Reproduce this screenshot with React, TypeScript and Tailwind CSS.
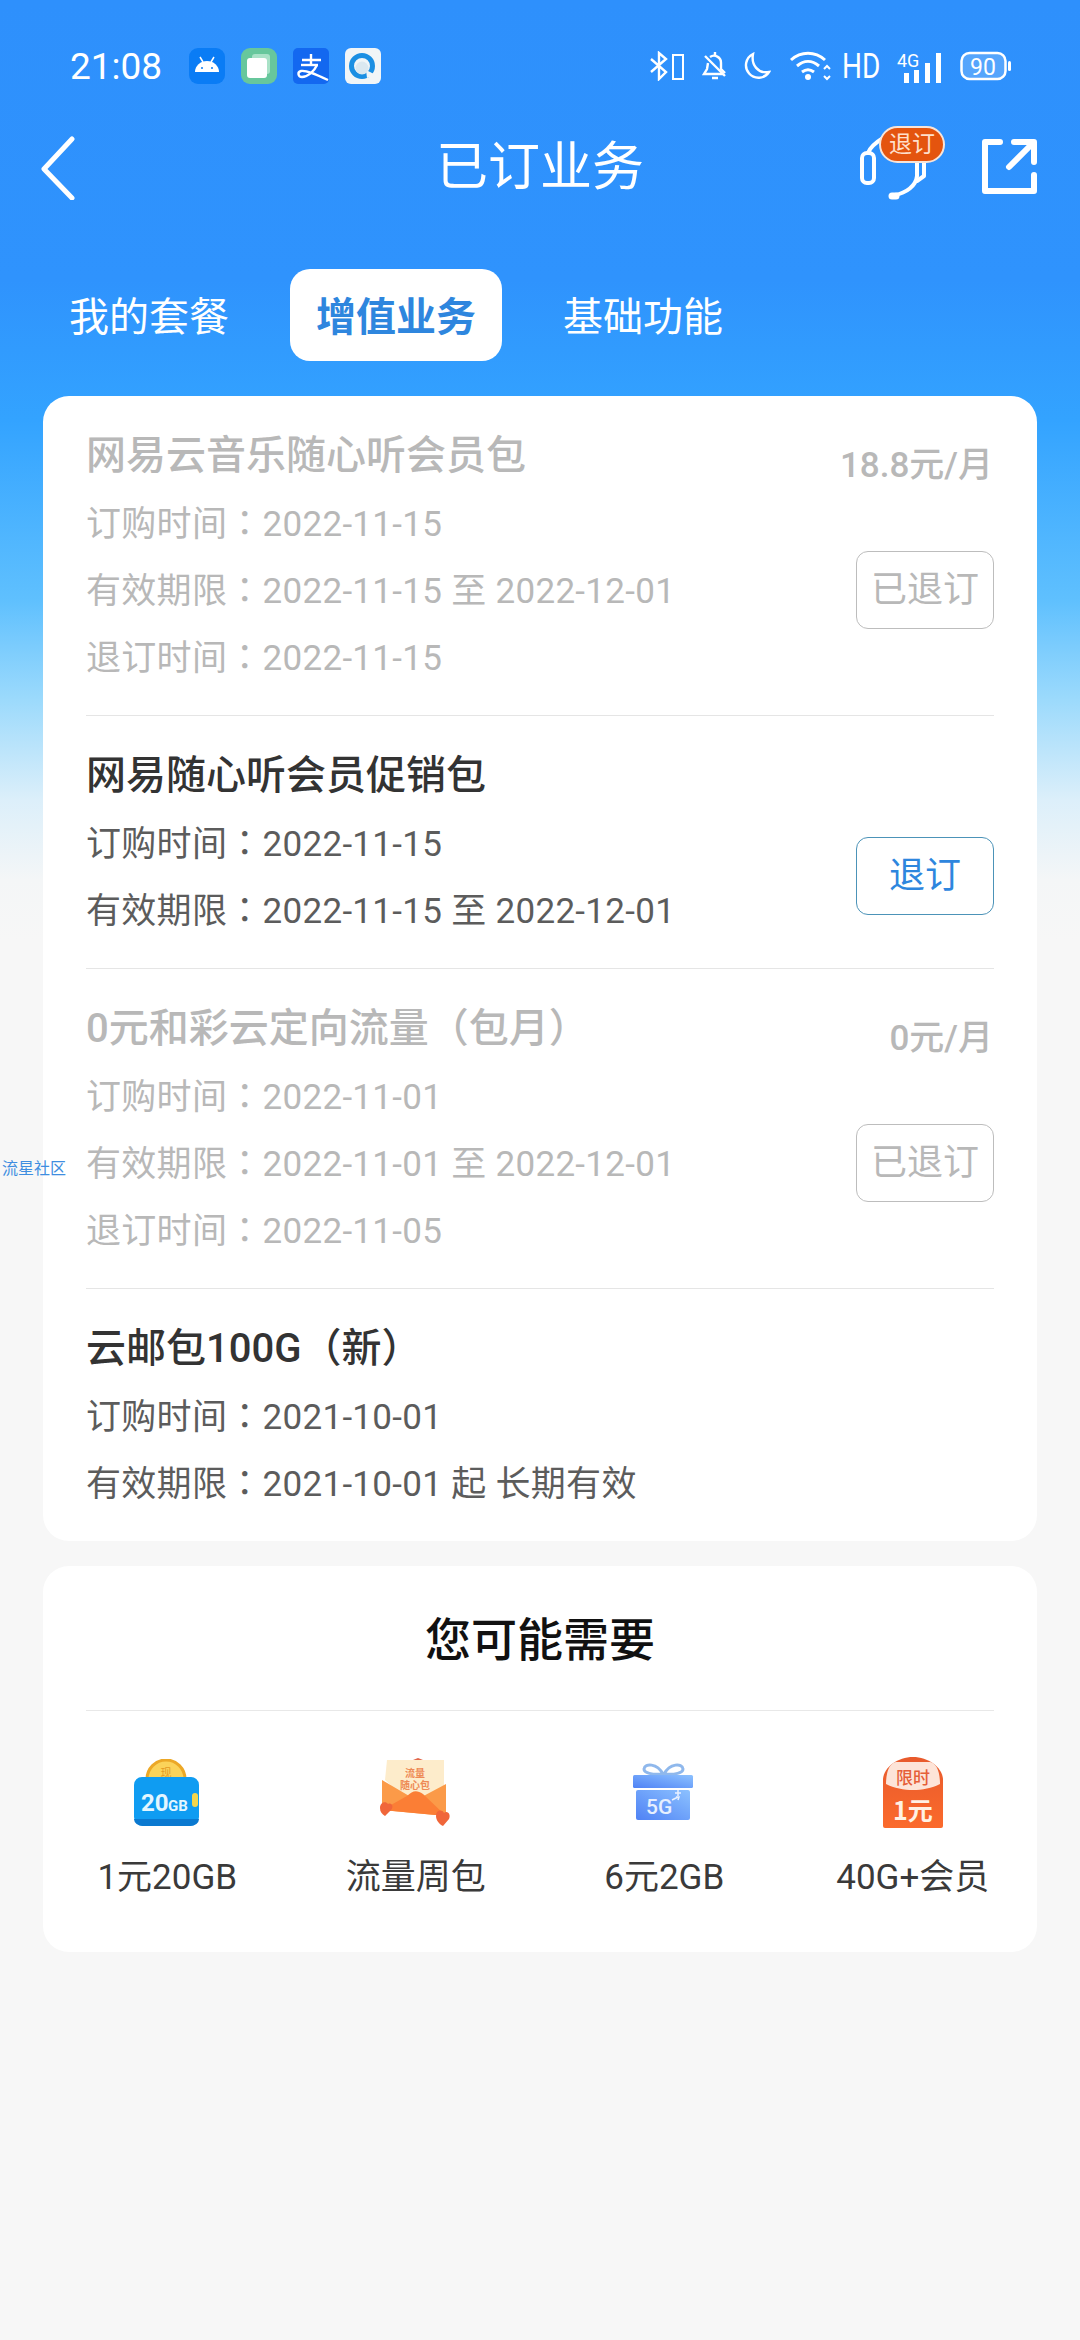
const packages = [
  {
    title: '网易云音乐随心听会员包',
    price: '18.8元/月',
    lines: [
      ['订购时间', '2022-11-15'],
      ['有效期限', '2022-11-15 至 2022-12-01'],
      ['退订时间', '2022-11-15'],
    ],
    action: '已退订',
    off: true,
  },
  {
    title: '网易随心听会员促销包',
    lines: [
      ['订购时间', '2022-11-15'],
      ['有效期限', '2022-11-15 至 2022-12-01'],
    ],
    action: '退订',
    off: false,
  },
  {
    title: '0元和彩云定向流量（包月）',
    price: '0元/月',
    lines: [
      ['订购时间', '2022-11-01'],
      ['有效期限', '2022-11-01 至 2022-12-01'],
      ['退订时间', '2022-11-05'],
    ],
    action: '已退订',
    off: true,
  },
  {
    title: '云邮包100G（新）',
    lines: [
      ['订购时间', '2021-10-01'],
      ['有效期限', '2021-10-01 起 长期有效'],
    ],
    off: false,
  },
];

function AndroidIcon() {
  return (
    <svg width="36" height="36" viewBox="0 0 36 36">
      <rect width="36" height="36" rx="9" fill="#0a7cf5" />
      <path d="M6 24a12 11 0 0 1 24 0z" fill="#fff" />
      <path d="M11 9l3 5M25 9l-3 5" stroke="#fff" strokeWidth="1.500" />
      <circle cx="13" cy="20" r="1" fill="#0a7cf5" />
      <circle cx="23" cy="20" r="1" fill="#0a7cf5" />
    </svg>
  );
}

function GreenIcon() {
  return (
    <svg width="36" height="36" viewBox="0 0 36 36">
      <rect width="36" height="36" rx="9" fill="#67c79c" />
      <rect x="11" y="6" width="18" height="20" rx="3" fill="#a9e2c7" />
      <rect x="6" y="10" width="20" height="20" rx="3" fill="#fff" />
    </svg>
  );
}

function AlipayIcon() {
  return (
    <svg width="36" height="36" viewBox="0 0 36 36" fill="none" stroke="#fff" strokeWidth="2.400">
      <rect width="36" height="36" rx="5" fill="#1368f0" stroke="none" />
      <path d="M9 12H28M18 6V17M24 17c-3 7-10 12-15 12-4 0-5-5-1-6 5-1 14 3 27 9" />
      <path d="M8 17H25" />
    </svg>
  );
}

function BrowserIcon() {
  return (
    <svg width="36" height="36" viewBox="0 0 36 36">
      <rect width="36" height="36" rx="6" fill="#f1f5f7" />
      <circle cx="17" cy="18" r="10.500" fill="none" stroke="#1b8fe3" strokeWidth="5" />
      <path d="M21 22l10 5-9 3z" fill="#f1f5f7" />
      <circle cx="17" cy="20" r="6.500" fill="#dbe8f0" />
    </svg>
  );
}

function StatusRight() {
  return (
    <div className="flex items-center text-white">
      <svg width="35" height="30" viewBox="0 0 35 30" fill="none" stroke="#fff" strokeWidth="2.400">
        <path d="M1 8l15 13-7 7V2l7 6L1 21" />
        <rect x="23" y="4" width="10" height="24" strokeWidth="2" />
      </svg>
      <svg className="ml-[17px]" width="26" height="30" viewBox="0 0 26 30" fill="none" stroke="#fff" strokeWidth="2.400">
        <path d="M8 6a7 7 0 0 1 11 6v6l4 4M6 12l-1 6-3 5h19" />
        <path d="M3 5l20 20M10 27h6M13 1v3" />
      </svg>
      <svg className="ml-[16px]" width="27" height="28" viewBox="0 0 27 28" fill="none" stroke="#fff" strokeWidth="2.400">
        <path d="M9 2a12.500 12.500 0 1 0 16 18C14 22 7 13 9 2z" />
      </svg>
      <svg className="ml-[18px]" width="42" height="30" viewBox="0 0 42 30" fill="none" stroke="#fff" strokeWidth="3">
        <path d="M2 9c10-9 24-9 34 0M8 15c7-6 15-6 22 0M13 21c4-3 8-3 12 0" />
        <circle cx="19" cy="26" r="3" fill="#fff" stroke="none" />
        <path d="M35 18l3-3 3 3M35 25l3 3 3-3" strokeWidth="2" />
      </svg>
      <div className="ml-[11px] w-[38px] text-[35px] leading-none scale-x-[0.8] origin-left">HD</div>
      <svg className="ml-[17px]" width="45" height="36" viewBox="0 -4 45 36">
        <text x="0" y="15" fontSize="18" fill="#fff" fontFamily="Roboto">4G</text>
        <rect x="7" y="21" width="5" height="10" fill="#fff" />
        <rect x="17" y="18" width="5" height="13" fill="#fff" />
        <rect x="28" y="11" width="5" height="20" fill="#fff" />
        <rect x="39" y="1" width="5" height="30" fill="#fff" />
      </svg>
      <svg className="ml-[18px]" width="51" height="30" viewBox="0 0 51 30">
        <rect x="1.500" y="2" width="44" height="26" rx="8" fill="#ffffff30" stroke="#fff" strokeWidth="2.500" />
        <rect x="48" y="10" width="3" height="10" rx="1.500" fill="#fff" />
        <text x="23" y="23.500" textAnchor="middle" fontSize="23" fill="#fff" fontFamily="Roboto">90</text>
      </svg>
    </div>
  );
}

function Headset() {
  return (
    <div className="relative w-[86px] h-[74px]">
      <svg width="74" height="74" viewBox="0 0 74 74" fill="none" stroke="#fff" strokeWidth="4" strokeLinecap="round" strokeLinejoin="round">
        <path d="M9 27C11 21 16 17 24 12" />
        <rect x="3" y="27" width="12" height="30" rx="5" />
        <path d="M58 36v14C57 60 47 67 36 69" />
        <path d="M65 36v14L58 55" />
        <path d="M33 70h4" strokeWidth="7" />
      </svg>
      <div className="absolute left-[20px] top-0 w-[66px] h-[37px] rounded-full border-2 border-[#f7e4d8] bg-[#e4540e] text-[#ffe0cc] text-[23px] leading-[33px] text-center">
        退订
      </div>
    </div>
  );
}

function ShareIcon() {
  return (
    <svg width="56" height="57" viewBox="0 0 56 57" fill="none" stroke="#fff" strokeWidth="6" strokeLinejoin="round" strokeLinecap="round">
      <path d="M19 4H4v49h49V37" />
      <path d="M28 29L52 5M33 4h20v20" />
    </svg>
  );
}

function WalletPic() {
  return (
    <svg width="66" height="68" viewBox="0 0 66 68">
      <circle cx="32" cy="20" r="19" fill="#fbd35a" stroke="#eca827" strokeWidth="3" />
      <text x="32" y="18" textAnchor="middle" fontSize="11" fill="#e49a24" fontFamily="Noto Sans CJK SC">现</text>
      <path d="M8 18H56a8 8 0 0 1 9 8V58a9 9 0 0 1-9 9H9a9 9 0 0 1-9-9V26a8 8 0 0 1 8-8z" fill="#0f9cf2" />
      <path d="M0 60a9 7 0 0 0 9 7H56a9 7 0 0 0 9-7z" fill="#0b79d0" />
      <text x="7" y="52" fontSize="24" fontWeight="700" fill="#e3f6ff" fontFamily="Roboto">20</text>
      <text x="34" y="52" fontSize="15" fontWeight="700" fill="#e3f6ff" fontFamily="Roboto">GB</text>
      <rect x="58" y="34" width="6" height="14" rx="3" fill="#f4d64c" />
    </svg>
  );
}

function EnvelopePic() {
  return (
    <svg width="72" height="70" viewBox="0 0 72 70">
      <path d="M33 2l5-2 5 2z" fill="#e2674a" />
      <path d="M5 22L7 2H64V30L36 50z" fill="#fdeccb" />
      <text x="35" y="19" textAnchor="middle" fontSize="10" fontWeight="700" fill="#ee8a55" fontFamily="Noto Sans CJK SC">流量</text>
      <text x="35" y="31" textAnchor="middle" fontSize="10" fontWeight="700" fill="#ee8a55" fontFamily="Noto Sans CJK SC">随心包</text>
      <path d="M2 22L36 42 66 26V58L2 52z" fill="#fb9a48" />
      <path d="M2 52L27 38c6-6 10-6 16-2L66 58z" fill="#fb7e35" />
      <path d="M0 50c0-6 6-7 8-4 4-2 6 3 3 6l-6 6c-3-2-5-4-5-8z" fill="#f0663a" />
      <path d="M56 58c0-6 6-7 8-3 4-3 7 2 5 6l-6 7c-4-2-7-6-7-10z" fill="#f0663a" />
    </svg>
  );
}

function GiftPic() {
  return (
    <svg width="62" height="60" viewBox="0 0 62 60">
      <defs>
        <linearGradient id="giftFill" x1="0" y1="1" x2="1" y2="0">
          <stop offset="0" stopColor="#4f82f5" />
          <stop offset="1" stopColor="#8cc1ff" />
        </linearGradient>
      </defs>
      <path d="M30 11C24 0 12 0 11 6c0 4 8 6 19 5zM31 11C37 0 49 0 50 6c0 4-8 6-19 5z" fill="none" stroke="#8fb8ec" strokeWidth="3" />
      <rect x="0" y="12" width="60" height="13" rx="1.500" fill="url(#giftFill)" />
      <rect x="3" y="27" width="54" height="30" rx="2" fill="url(#giftFill)" />
      <text x="13" y="51" fontSize="21" fontWeight="500" fill="#e7f0ff" fontFamily="Roboto">5G</text>
      <path d="M39 37l6-3M43 34h3l-1 3M42 30h6M45 27v6" stroke="#e7f0ff" strokeWidth="1.500" fill="none" />
    </svg>
  );
}

function RedPacketPic() {
  return (
    <svg width="62" height="72" viewBox="0 0 62 72">
      <defs>
        <linearGradient id="packetFill" x1="0" y1="0" x2="0" y2="1">
          <stop offset="0" stopColor="#e85a2c" />
          <stop offset="1" stopColor="#fb6a2c" />
        </linearGradient>
      </defs>
      <path d="M1 22C2 10 16 0 31 0s29 10 30 22V69a2 2 0 0 1-2 2H3a2 2 0 0 1-2-2z" fill="url(#packetFill)" />
      <path d="M4 27C4 14 8 6 14 5H48c6 1 10 9 10 22-8 4-18 6-27 6S12 31 4 27z" fill="#fde4d8" />
      <text x="31" y="27" textAnchor="middle" fontSize="17" fontWeight="500" fill="#e55f38" fontFamily="Noto Sans CJK SC">限时</text>
      <text x="31" y="63" textAnchor="middle" fontSize="25" fontWeight="700" fill="#fff2e4" fontFamily="Noto Sans CJK SC">1元</text>
    </svg>
  );
}

const picks = [
  { label: '1元20GB', pic: <WalletPic /> },
  { label: '流量周包', pic: <EnvelopePic /> },
  { label: '6元2GB', pic: <GiftPic /> },
  { label: '40G+会员', pic: <RedPacketPic /> },
];

export default function App() {
  return (
    <div className="relative w-[1080px] h-[2340px] overflow-hidden font-['Roboto','Noto_Sans_CJK_SC',sans-serif] bg-[linear-gradient(180deg,#2e90fc_0px,#2f93fd_280px,#33a3ff_420px,#5fc0fe_600px,#9cdafc_700px,#dceffa_800px,#f4f6f7_880px,#f7f7f7_940px)]">
      {/* status bar */}
      <div className="h-[132px] flex items-center justify-between pl-[70px] pr-[69px]">
        <div className="flex items-center">
          <span className="w-[119px] text-[37px] leading-none text-white">21:08</span>
          <AndroidIcon />
          <div className="ml-[16px]"><GreenIcon /></div>
          <div className="ml-[16px]"><AlipayIcon /></div>
          <div className="ml-[16px]"><BrowserIcon /></div>
        </div>
        <StatusRight />
      </div>

      {/* title bar */}
      <div className="relative h-[72px] flex items-center justify-center text-white text-[52px] leading-none">
        <svg className="absolute left-[40px] top-[4px]" width="36" height="64" viewBox="0 0 36 64" fill="none" stroke="#fff" strokeWidth="5" strokeLinecap="round" strokeLinejoin="round">
          <path d="M32 3L4 33l28 29" />
        </svg>
        <span>已订业务</span>
        <div className="absolute right-[43px] top-[-6px] flex items-start gap-[36px]">
          <Headset />
          <div className="mt-[12px]"><ShareIcon /></div>
        </div>
      </div>

      {/* tabs */}
      <div className="mt-[65px] ml-[43px] flex items-center gap-[35px] h-[92px] text-[40px] leading-[98px] text-white">
        <div className="w-[212px] h-[92px] text-center">我的套餐</div>
        <div className="w-[212px] h-[92px] rounded-[20px] bg-white text-[#2e86de] font-bold text-center">增值业务</div>
        <div className="w-[212px] h-[92px] text-center">基础功能</div>
      </div>

      {/* subscribed packages */}
      <div className="mt-[35px] mx-[43px] px-[43px] rounded-[26px] bg-white divide-y divide-[#e5e5e5]">
        {packages.map((p) => (
          <div key={p.title} className={`pt-[27px] pb-[25px] ${p.off ? 'text-[#b8b8b8]' : 'text-[#5c5c5c]'}`}>
            <div className="flex items-start justify-between h-[66px]">
              <span className={`text-[40px] leading-[66px] font-medium ${p.off ? '' : 'text-[#333333]'}`}>{p.title}</span>
              {p.price && <span className="mt-[9px] mr-[1px] text-[35px] leading-[67px] font-medium">{p.price}</span>}
            </div>
            <div className="flex items-center justify-between">
              <div>
                {p.lines.map(([label, value]) => (
                  <div key={label} className="h-[67px] leading-[64px] text-[35px] tracking-[0.3px] whitespace-pre">
                    {label}
                    <span className="font-['Noto_Sans_CJK_TC']">：</span>
                    {value}
                  </div>
                ))}
              </div>
              {p.action && (
                <div className={`w-[138px] h-[78px] rounded-[12px] border text-center text-[36px] leading-[76px] ${p.off ? 'border-[#bdbdbd] text-[#b8b8b8]' : 'border-[#4c93b8] text-[#2e86de]'}`}>
                  {p.action}
                </div>
              )}
            </div>
          </div>
        ))}
      </div>

      {/* suggestions */}
      <div className="mt-[25px] mx-[43px] h-[386px] rounded-[26px] bg-white">
        <div className="mx-[43px] h-[145px] pt-[4px] border-b border-[#e8e8e8] flex items-center justify-center text-[46px] font-medium text-[#111111]">
          您可能需要
        </div>
        <div className="grid grid-cols-4">
          {picks.map((item) => (
            <div key={item.label} className="flex flex-col items-center">
              <div className="h-[100px] mt-[32px] flex items-center justify-center">{item.pic}</div>
              <div className="mt-[10px] text-[35px] leading-[50px] text-[#3a3a3a]">{item.label}</div>
            </div>
          ))}
        </div>
      </div>

      <div className="absolute left-[2px] top-[1160px] text-[16px] leading-[18px] text-[#3f8ee0]">流星社区</div>
    </div>
  );
}
